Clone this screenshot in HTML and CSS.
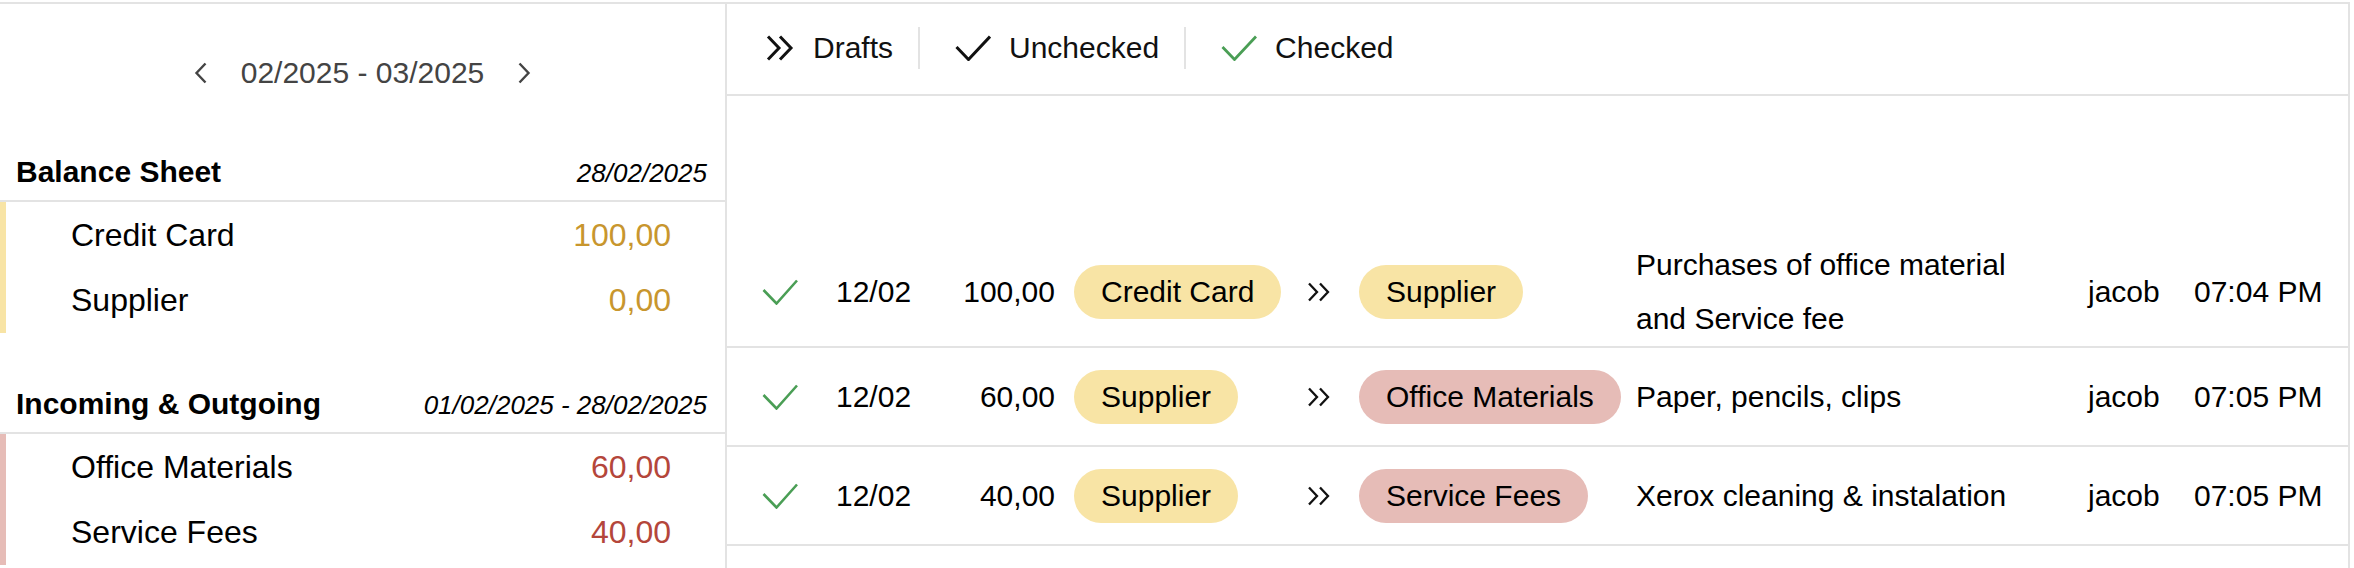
FILE: index.html
```html
<!DOCTYPE html>
<html lang="en">
<head>
<meta charset="utf-8">
<title>Ledger</title>
<link rel="stylesheet" href="styles.css">
</head>
<body>
<div class="app">
  <aside class="sidebar">
    <div class="period-nav">
      <svg class="chev" width="14" height="22" viewBox="0 0 14 22"><path d="M11.5 1.5 L2.5 11 L11.5 20.5"/></svg>
      <span class="period">02/2025 - 03/2025</span>
      <svg class="chev" width="14" height="22" viewBox="0 0 14 22"><path d="M2.5 1.5 L11.5 11 L2.5 20.5"/></svg>
    </div>

    <section class="group group-first">
      <header class="group-head">
        <h2>Balance Sheet</h2>
        <span class="group-date">28/02/2025</span>
      </header>
      <ul class="accounts accounts-asset">
        <li><span>Credit Card</span><span class="amt">100,00</span></li>
        <li><span>Supplier</span><span class="amt">0,00</span></li>
      </ul>
    </section>

    <section class="group group-second">
      <header class="group-head">
        <h2>Incoming &amp; Outgoing</h2>
        <span class="group-date">01/02/2025 - 28/02/2025</span>
      </header>
      <ul class="accounts accounts-expense">
        <li><span>Office Materials</span><span class="amt">60,00</span></li>
        <li><span>Service Fees</span><span class="amt">40,00</span></li>
      </ul>
    </section>
  </aside>

  <main class="panel">
    <nav class="tabs">
      <div class="tab">
        <svg class="ico" width="30" height="26" viewBox="0 0 30 26"><path d="M3 1.5 L14 13 L3 24.5 M15 1.5 L26 13 L15 24.5"/></svg>
        <span>Drafts</span>
      </div>
      <div class="tab">
        <svg class="ico" width="36" height="26" viewBox="0 0 36 26"><path d="M1.5 12 L13.5 24.5 L35 1.5"/></svg>
        <span>Unchecked</span>
      </div>
      <div class="tab">
        <svg class="ico ok" width="36" height="26" viewBox="0 0 36 26"><path d="M1.5 12 L13.5 24.5 L35 1.5"/></svg>
        <span>Checked</span>
      </div>
    </nav>

    <div class="entries">
      <div class="entry">
        <svg class="ico ok thin" width="36" height="26" viewBox="0 0 36 26"><path d="M1.5 11 L14.5 24.5 L35 1.5"/></svg>
        <span class="date">12/02</span>
        <span class="amount">100,00</span>
        <span class="from"><span class="chip chip-y">Credit Card</span></span>
        <svg class="arrow" width="24" height="20" viewBox="0 0 24 20"><path d="M2 1.5 L10 10 L2 18.5 M13 1.5 L21 10 L13 18.5"/></svg>
        <span class="to"><span class="chip chip-y">Supplier</span></span>
        <span class="desc">Purchases of office material and Service fee</span>
        <span class="user">jacob</span>
        <span class="time">07:04 PM</span>
      </div>
      <div class="entry">
        <svg class="ico ok thin" width="36" height="26" viewBox="0 0 36 26"><path d="M1.5 11 L14.5 24.5 L35 1.5"/></svg>
        <span class="date">12/02</span>
        <span class="amount">60,00</span>
        <span class="from"><span class="chip chip-y">Supplier</span></span>
        <svg class="arrow" width="24" height="20" viewBox="0 0 24 20"><path d="M2 1.5 L10 10 L2 18.5 M13 1.5 L21 10 L13 18.5"/></svg>
        <span class="to"><span class="chip chip-r">Office Materials</span></span>
        <span class="desc">Paper, pencils, clips</span>
        <span class="user">jacob</span>
        <span class="time">07:05 PM</span>
      </div>
      <div class="entry">
        <svg class="ico ok thin" width="36" height="26" viewBox="0 0 36 26"><path d="M1.5 11 L14.5 24.5 L35 1.5"/></svg>
        <span class="date">12/02</span>
        <span class="amount">40,00</span>
        <span class="from"><span class="chip chip-y">Supplier</span></span>
        <svg class="arrow" width="24" height="20" viewBox="0 0 24 20"><path d="M2 1.5 L10 10 L2 18.5 M13 1.5 L21 10 L13 18.5"/></svg>
        <span class="to"><span class="chip chip-r">Service Fees</span></span>
        <span class="desc">Xerox cleaning &amp; instalation</span>
        <span class="user">jacob</span>
        <span class="time">07:05 PM</span>
      </div>
    </div>
  </main>
</div>
</body>
</html>
```
FILE: styles.css
```css
html, body {
  margin: 0;
  background: #fff;
}

body {
  padding-top: 2px;
  overflow: hidden;
  font-family: "Liberation Sans", Arial, sans-serif;
  color: #000;
}

.app {
  display: flex;
  width: 2350px;
  height: 566px;
  box-sizing: border-box;
  border-top: 2px solid #e3e3e3;
  border-right: 2px solid #e3e3e3;
}

/* ---------- sidebar ---------- */
.sidebar {
  flex: none;
  width: 725px;
  border-right: 2px solid #e3e3e3;
}

.period-nav {
  display: flex;
  justify-content: center;
  align-items: center;
  gap: 33px;
  padding-top: 47px;
  height: 44px;
  line-height: 44px;
  font-size: 30px;
  color: #444;
}

.chev path {
  fill: none;
  stroke: #444;
  stroke-width: 2.4;
}

.group-first { margin-top: 57px; }
.group-second { margin-top: 51px; }

.group-head {
  display: flex;
  justify-content: space-between;
  align-items: baseline;
  height: 48px;
  line-height: 40px;
  padding: 0 18px 0 16px;
  border-bottom: 2px solid #e3e3e3;
}

.group-head h2 {
  margin: 0;
  font-size: 30px;
  font-weight: bold;
}

.group-date {
  font-size: 26px;
  font-style: italic;
}

.accounts {
  list-style: none;
  margin: 0;
  padding: 1px 0 0;
  border-left: 6px solid transparent;
}

.accounts-asset { border-left-color: #f8e4a5; }
.accounts-expense { border-left-color: #e6bcb7; }

.accounts li {
  display: flex;
  justify-content: space-between;
  align-items: center;
  height: 65px;
  padding: 0 54px 0 65px;
  font-size: 32px;
}

.accounts-asset .amt { color: #c8962e; }
.accounts-expense .amt { color: #b4463b; }

/* ---------- main panel ---------- */
.panel {
  flex: 1;
  min-width: 0;
}

.tabs {
  display: flex;
  align-items: center;
  height: 87px;
  padding: 0 0 3px 2px;
  border-bottom: 2px solid #e3e3e3;
}

.tab {
  display: flex;
  align-items: center;
  gap: 18px;
  height: 42px;
  padding: 0 25px 0 36px;
  font-size: 30px;
  color: #111;
}

.tab + .tab {
  border-left: 2px solid #e3e3e3;
  padding-left: 35px;
}

.ico path {
  fill: none;
  stroke: #111;
  stroke-width: 3;
}

.ico.ok path { stroke: #4a9e55; stroke-width: 2.8; }
.ico.thin path { stroke-width: 2.6; }

.entries {
  margin-top: 142px;
}

.entry {
  display: grid;
  grid-template-columns: 74px 119px 100px 252px 52px 277px 452px 106px 1fr;
  align-items: center;
  min-height: 97px;
  padding-left: 35px;
  border-bottom: 2px solid #e3e3e3;
  font-size: 30px;
}

.amount { text-align: right; }

.from { padding-left: 19px; }

.arrow path {
  fill: none;
  stroke: #111;
  stroke-width: 2.3;
}

.chip {
  display: inline-block;
  height: 54px;
  line-height: 54px;
  padding: 0 27px;
  border-radius: 27px;
  white-space: nowrap;
}

.chip-y { background: #f8e4a5; }
.chip-r { background: #e6bcb7; }

.desc {
  line-height: 54px;
  padding-right: 40px;
}
```
